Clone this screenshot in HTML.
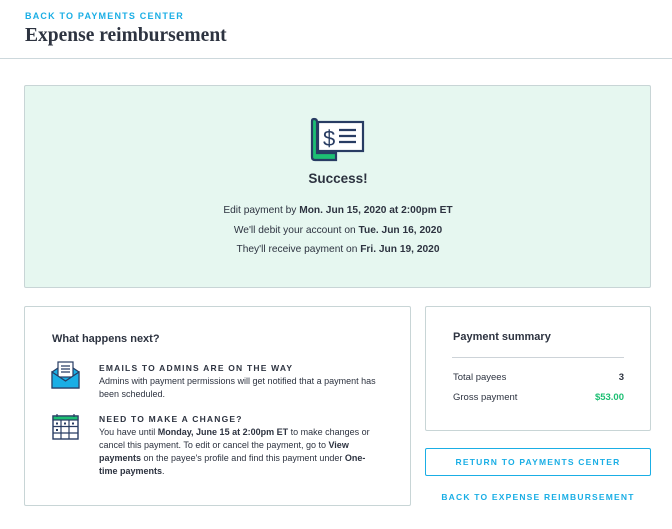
<!DOCTYPE html>
<html><head><style>
*{margin:0;padding:0;box-sizing:border-box}
body{width:672px;height:529px;background:#fff;font-family:"Liberation Sans",sans-serif;color:#2d3340;position:relative;overflow:hidden}
.abs{position:absolute}
.cap{font-weight:bold;letter-spacing:1.2px;color:#1aaee5;font-size:9px}
.b{font-weight:bold}
</style></head><body>
<div class="abs cap" style="left:25px;top:11px">BACK TO PAYMENTS CENTER</div>
<div class="abs" style="left:25px;top:25px;font-family:'Liberation Serif',serif;font-weight:bold;font-size:19.5px;color:#2d3340">Expense reimbursement</div>
<div class="abs" style="left:0;top:58px;width:672px;height:1px;background:#cdd8dc"></div>

<div class="abs" style="left:24px;top:85px;width:627px;height:203px;background:#e6f7f0;border:1px solid #c8d5d6;border-radius:2px"></div>
<svg class="abs" style="left:308px;top:117px" width="60" height="46" viewBox="0 0 60 46">
<path d="M4 4 Q4 2 6 2 Q9 2 9 5 L9 36 L28 36 L28 43 L7 43 Q4 43 4 40 Z" fill="#1dbf73" stroke="#283c63" stroke-width="2.2"/>
<rect x="10" y="5" width="45" height="29" fill="#fff" stroke="#283c63" stroke-width="2.2"/>
<text x="15" y="29" font-family="Liberation Sans" font-size="22" fill="#283c63">$</text>
<path d="M31 13H48M31 19H48M31 25H48" stroke="#283c63" stroke-width="2.2"/>
</svg>
<div class="abs b" style="left:0;width:676px;text-align:center;top:171px;font-size:13.5px">Success!</div>
<div class="abs" style="left:0;width:676px;text-align:center;top:201px;font-size:10.2px;line-height:19.5px">Edit payment by <span class="b">Mon. Jun 15, 2020 at 2:00pm ET</span><br>We'll debit your account on <span class="b">Tue. Jun 16, 2020</span><br>They'll receive payment on <span class="b">Fri. Jun 19, 2020</span></div>

<div class="abs" style="left:24px;top:306px;width:387px;height:200px;border:1px solid #c8d5d6;border-radius:2px"></div>
<div class="abs b" style="left:52px;top:333px;font-size:11px">What happens next?</div>
<svg class="abs" style="left:51px;top:360px" width="29" height="29" viewBox="0 0 29 29">
<path d="M1 12 L14.5 3 L28 12 V28 H1 Z" fill="#1aaee5" stroke="#283c63" stroke-width="1.2"/>
<rect x="7" y="2" width="15" height="15" fill="#fff" stroke="#283c63" stroke-width="1.2"/>
<path d="M10 6H19M10 9H19M10 12H19" stroke="#283c63" stroke-width="1.2"/>
<path d="M1 12 L14.5 21 L28 12 V28 H1 Z" fill="#1aaee5" stroke="#283c63" stroke-width="1.2"/>
</svg>
<div class="abs cap" style="left:99px;top:363px;color:#2d3340;font-size:8.5px">EMAILS TO ADMINS ARE ON THE WAY</div>
<div class="abs" style="left:99px;top:375px;font-size:9px;line-height:13px;width:292px">Admins with payment permissions will get notified that a payment has been scheduled.</div>
<svg class="abs" style="left:52px;top:413px" width="27" height="27" viewBox="0 0 27 27">
<rect x="1" y="3" width="25" height="23" fill="#fff" stroke="#283c63" stroke-width="1.4"/>
<rect x="1" y="3" width="25" height="4" fill="#1dbf73" stroke="#283c63" stroke-width="1.2"/>
<path d="M9 7V26M17 7V26M1 13.5H26M1 20H26M5 1V4M22 1V4" stroke="#283c63" stroke-width="1.2"/>
<rect x="4" y="9.5" width="2" height="2" fill="#283c63"/><rect x="12" y="9.5" width="2" height="2" fill="#283c63"/><rect x="20" y="9.5" width="2" height="2" fill="#283c63"/><rect x="4" y="16" width="2" height="2" fill="#283c63"/>
</svg>
<div class="abs cap" style="left:99px;top:414px;color:#2d3340;font-size:8.5px">NEED TO MAKE A CHANGE?</div>
<div class="abs" style="left:99px;top:426px;font-size:9px;line-height:13px;width:292px">You have until <span class="b">Monday, June 15 at 2:00pm ET</span> to make changes or<br>cancel this payment. To edit or cancel the payment, go to <span class="b">View</span><br><span class="b">payments</span> on the payee's profile and find this payment under <span class="b">One-</span><br><span class="b">time payments</span>.</div>

<div class="abs" style="left:425px;top:306px;width:226px;height:125px;border:1px solid #c8d5d6;border-radius:2px"></div>
<div class="abs b" style="left:453px;top:331px;font-size:11px">Payment summary</div>
<div class="abs" style="left:452px;top:357px;width:172px;height:1px;background:#cdd3d8"></div>
<div class="abs" style="left:453px;top:372px;font-size:9.5px">Total payees</div>
<div class="abs b" style="left:560px;width:64px;text-align:right;top:372px;font-size:9.5px">3</div>
<div class="abs" style="left:453px;top:392px;font-size:9.5px">Gross payment</div>
<div class="abs b" style="left:540px;width:84px;text-align:right;top:392px;font-size:9.5px;color:#1dbf73">$53.00</div>
<div class="abs cap" style="left:425px;top:448px;width:226px;height:28px;border:1px solid #1aaee5;border-radius:2px;text-align:center;line-height:26px;font-size:8.5px">RETURN TO PAYMENTS CENTER</div>
<div class="abs cap" style="left:425px;top:492px;width:226px;text-align:center;font-size:8.5px">BACK TO EXPENSE REIMBURSEMENT</div>
</body></html>
